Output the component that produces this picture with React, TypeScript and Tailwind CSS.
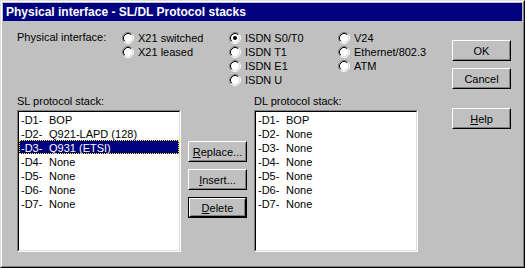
import React from "react";

const font = "font-['Liberation_Sans',Arial,sans-serif]";

function Radio({ checked }: { checked?: boolean }) {
  return (
    <svg width="12" height="12" viewBox="0 0 12 12" className="shrink-0">
      <circle cx="6" cy="6" r="4.5" fill="#ffffff" />
      <path d="M2.11 9.89 A5.5 5.5 0 0 1 9.89 2.11" stroke="#808080" strokeWidth="1" fill="none" />
      <path d="M9.89 2.11 A5.5 5.5 0 0 1 2.11 9.89" stroke="#ffffff" strokeWidth="1" fill="none" />
      <path d="M2.82 9.18 A4.5 4.5 0 0 1 9.18 2.82" stroke="#000000" strokeWidth="1" fill="none" />
      <path d="M9.18 2.82 A4.5 4.5 0 0 1 2.82 9.18" stroke="#dfdfdf" strokeWidth="1" fill="none" />
      {checked && <circle cx="6" cy="6" r="2" fill="#000000" />}
    </svg>
  );
}

function RadioItem({ label, checked }: { label: string; checked?: boolean }) {
  return (
    <div className="flex h-[14px] items-center">
      <Radio checked={checked} />
      <span className="ml-[4px] leading-[14px] whitespace-nowrap">{label}</span>
    </div>
  );
}

function Button({
  children,
  isDefault,
}: {
  children: React.ReactNode;
  isDefault?: boolean;
}) {
  const inner = (
    <div className="flex-1 flex border border-t-white border-l-white border-r-black border-b-black">
      <div className="flex-1 flex items-center justify-center border border-t-[#c0c0c0] border-l-[#c0c0c0] border-r-[#808080] border-b-[#808080] leading-[14px]">
        {children}
      </div>
    </div>
  );
  if (isDefault) {
    return <div className="flex w-[59px] h-[21px] border border-black">{inner}</div>;
  }
  return <div className="flex w-[59px] h-[21px]">{inner}</div>;
}

function ListBox({
  items,
  selected,
}: {
  items: [string, string][];
  selected?: number;
}) {
  return (
    <div className="flex w-[164px] h-[142px] border border-t-[#808080] border-l-[#808080] border-r-white border-b-white">
      <div className="flex-1 bg-white border border-t-black border-l-black border-r-[#dfdfdf] border-b-[#dfdfdf]">
        {items.map(([code, name], i) => (
          <div
            key={code}
            className={
              i === selected
                ? "flex h-[14px] pl-[2px] leading-[16px] bg-[#000080] text-white outline-1 outline-dotted outline-[#ffff00] -outline-offset-1"
                : "flex h-[14px] pl-[2px] leading-[16px]"
            }
          >
            <span className="w-[28px] shrink-0">{code}</span>
            <span className="whitespace-nowrap">{name}</span>
          </div>
        ))}
      </div>
    </div>
  );
}

export default function App() {
  const sl: [string, string][] = [
    ["-D1-", "BOP"],
    ["-D2-", "Q921-LAPD (128)"],
    ["-D3-", "Q931 (ETSI)"],
    ["-D4-", "None"],
    ["-D5-", "None"],
    ["-D6-", "None"],
    ["-D7-", "None"],
  ];
  const dl: [string, string][] = [
    ["-D1-", "BOP"],
    ["-D2-", "None"],
    ["-D3-", "None"],
    ["-D4-", "None"],
    ["-D5-", "None"],
    ["-D6-", "None"],
    ["-D7-", "None"],
  ];
  return (
    <div className={`${font} text-[11px] text-black w-[525px] h-[268px] flex border border-t-[#dfdfdf] border-l-[#dfdfdf] border-r-black border-b-black`}>
      <div className="flex-1 flex flex-col bg-[#c0c0c0] p-[1px] border border-t-white border-l-white border-r-[#808080] border-b-[#808080]">
        <div className="h-[18px] bg-[#000080] text-white font-bold text-[12px] leading-[18px] pl-[3px] whitespace-nowrap">
          Physical interface - SL/DL Protocol stacks
        </div>
        <div className="flex-1 flex">
          <div className="flex-1 flex flex-col pl-[14px] pt-[10px]">
            <div className="flex">
              <div className="w-[105px] leading-[14px] -mt-[1px]">Physical interface:</div>
              <div className="w-[107px] flex flex-col">
                <RadioItem label="X21 switched" />
                <RadioItem label="X21 leased" />
              </div>
              <div className="w-[109px] flex flex-col">
                <RadioItem label="ISDN S0/T0" checked />
                <RadioItem label="ISDN T1" />
                <RadioItem label="ISDN E1" />
                <RadioItem label="ISDN U" />
              </div>
              <div className="flex flex-col">
                <RadioItem label="V24" />
                <RadioItem label="Ethernet/802.3" />
                <RadioItem label="ATM" />
              </div>
            </div>
            <div className="flex items-start mt-[7px]">
              <div className="flex flex-col">
                <div className="h-[14px] leading-[14px] mb-[2px]">SL protocol stack:</div>
                <ListBox items={sl} selected={2} />
              </div>
              <div className="flex flex-col gap-[7px] ml-[7px] mt-[47px]">
                <Button>
                  <span><span className="underline">R</span>eplace...</span>
                </Button>
                <Button>
                  <span><span className="underline">I</span>nsert...</span>
                </Button>
                <Button isDefault>
                  <span><span className="underline">D</span>elete</span>
                </Button>
              </div>
              <div className="flex flex-col ml-[7px]">
                <div className="h-[14px] leading-[14px] mb-[2px]">DL protocol stack:</div>
                <ListBox items={dl} />
              </div>
            </div>
          </div>
          <div className="flex flex-col mt-[19px] mr-[11px]">
            <Button>OK</Button>
            <div className="h-[7px]" />
            <Button>Cancel</Button>
            <div className="h-[19px]" />
            <Button>
              <span><span className="underline">H</span>elp</span>
            </Button>
          </div>
        </div>
      </div>
    </div>
  );
}
